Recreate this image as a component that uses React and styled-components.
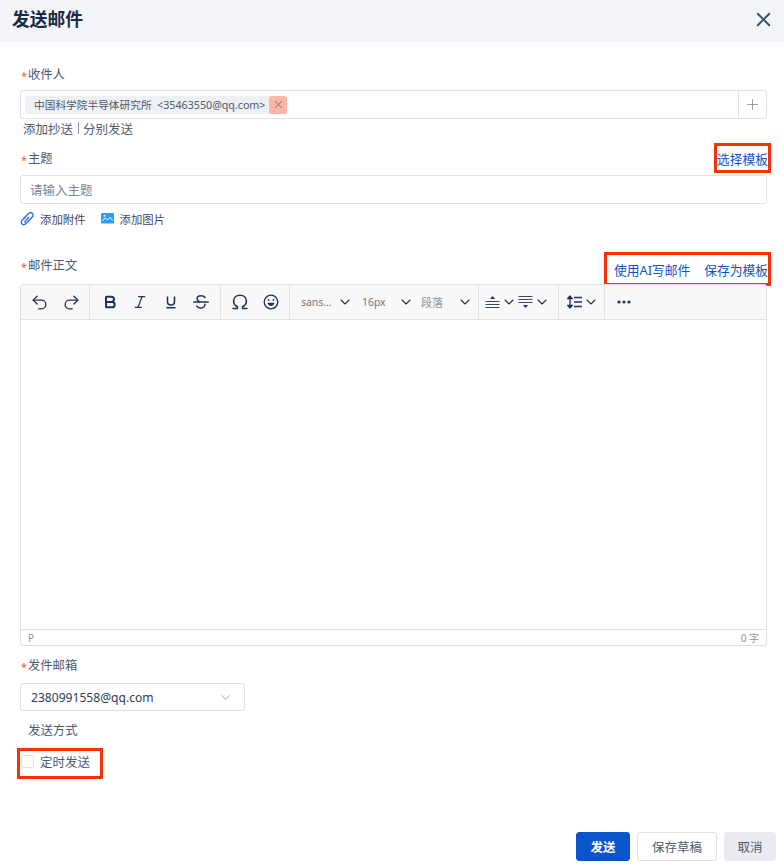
import React from "react"
import styled, { createGlobalStyle } from "styled-components"
import { Undo2, Redo2, Bold, Italic, ChevronDown, X, Plus } from "lucide-react"

const GlobalStyle = createGlobalStyle`
  html, body { margin: 0; padding: 0; background: #fff; }
  body { font-family: "Noto Sans", "Noto Sans CJK SC", sans-serif; }
  * { box-sizing: border-box; }
`

const Dialog = styled.div`
  width: 784px;
  height: 866px;
  display: flex;
  flex-direction: column;
  background: #fff;
  overflow: hidden;
`

const Header = styled.header`
  height: 42px;
  flex: none;
  display: flex;
  align-items: center;
  justify-content: space-between;
  padding: 0 9px 4px 12px;
  background: #f2f4f7;
`

const Title = styled.h1`
  margin: 0;
  font-size: 17.8px;
  font-weight: 700;
  line-height: 38px;
  color: #1a2b45;
`

const CloseButton = styled.span`
  display: flex;
  color: #3c4a63;
`

const Body = styled.div`
  flex: 1;
  display: flex;
  flex-direction: column;
  padding: 0 17px 0 20px;
`

const LabelRow = styled.div`
  height: 20px;
  flex: none;
  margin-top: ${p => p.$top}px;
  display: flex;
  align-items: center;
  justify-content: space-between;
`

const Label = styled.label`
  display: flex;
  align-items: center;
  font-size: 12.3px;
  line-height: 20px;
  color: #4d5a70;
  padding: 2px 0 0 8px;
  position: relative;
`

const Star = styled.span`
  position: absolute;
  left: 1px;
  top: 3px;
  font-size: 11px;
  color: #f5583a;
`

const RedBox = styled.div`
  flex: none;
  display: flex;
  align-items: center;
  gap: 14px;
  height: ${p => p.$h}px;
  margin-top: ${p => p.$top || 0}px;
  margin-right: -4px;
  padding: 2px 0 0 ${p => p.$pad}px;
  border: 3px solid #f5310a;
`

const LinkText = styled.a`
  font-size: 12.75px;
  line-height: 20px;
  color: #0a55cc;
  white-space: nowrap;
`

const RecipientBox = styled.div`
  height: 29px;
  margin-top: 6px;
  display: flex;
  align-items: center;
  justify-content: space-between;
  padding-left: 4px;
  border: 1px solid #dfe1e9;
  border-radius: 3px;
`

const Tag = styled.div`
  height: 18px;
  display: flex;
  align-items: center;
  padding-left: 9px;
  background: #eef0f4;
  border-radius: 3px;
  font-size: 10.7px;
  color: #505b70;
`

const TagClose = styled.span`
  width: 18px;
  height: 18px;
  margin-left: 4px;
  display: flex;
  align-items: center;
  justify-content: center;
  background: #fbb5a8;
  border-radius: 3px;
  color: #4d5a70;
`

const AddCell = styled.span`
  width: 28px;
  height: 100%;
  display: flex;
  align-items: center;
  justify-content: center;
  border-left: 1px solid #dfe1e9;
  color: #7c8698;
`

const CcRow = styled.div`
  height: 18px;
  flex: none;
  padding-left: 3px;
  display: flex;
  align-items: center;
  font-size: 12.5px;
  color: #4d5a70;
`

const CcDivider = styled.i`
  width: 1px;
  height: 12px;
  margin: 0 4.5px;
  background: #8a93a5;
`

const TextInput = styled.input`
  display: block;
  width: 100%;
  height: 29px;
  flex: none;
  margin-top: 7px;
  padding: 1px 9px 0;
  border: 1px solid #dfe1e9;
  border-radius: 3px;
  outline: none;
  font: 12.5px "Noto Sans", "Noto Sans CJK SC", sans-serif;
  &::placeholder { color: #7c8698; opacity: 1; }
`

const AttachRow = styled.div`
  height: 20px;
  flex: none;
  margin-top: 5px;
  display: flex;
  align-items: center;
  gap: 15px;
`

const AttachItem = styled.span`
  display: flex;
  align-items: center;
  gap: 6px;
  font-size: 11.4px;
  color: #3f4a5e;
`

const Editor = styled.div`
  height: 362px;
  flex: none;
  display: flex;
  flex-direction: column;
  border: 1px solid #dfe1e9;
  border-radius: 3px;
`

const Toolbar = styled.div`
  height: 35px;
  flex: none;
  display: flex;
  background: #f8f8f9;
  border-bottom: 1px solid #dfe1e9;
`

const ToolGroup = styled.div`
  display: flex;
  align-items: center;
  width: ${p => p.$w}px;
  padding-left: ${p => p.$pad}px;
  border-right: ${p => (p.$last ? "none" : "1px solid #dfe1e9")};
`

const ToolButton = styled.span`
  width: ${p => p.$w || 32}px;
  flex: none;
  display: flex;
  align-items: center;
  justify-content: center;
  gap: 1px;
  color: #1f3354;
`

const SelectTool = styled.span`
  width: ${p => p.$w}px;
  flex: none;
  margin-left: ${p => p.$left || 0}px;
  display: flex;
  align-items: center;
  justify-content: space-between;
  font-size: ${p => p.$size || 10.4}px;
  color: ${p => p.$color || "#6f7580"};
`

const ToolChevron = styled(ChevronDown)`
  color: #1f3354;
  flex: none;
`

const EditArea = styled.div`
  flex: 1;
`

const StatusBar = styled.div`
  height: 16px;
  flex: none;
  display: flex;
  align-items: center;
  justify-content: space-between;
  padding: 0 7px;
  border-top: 1px solid #dfe1e9;
  font-size: 10px;
  color: #8f959e;
`

const SelectBox = styled.div`
  width: 225px;
  height: 28px;
  flex: none;
  margin-top: 8px;
  display: flex;
  align-items: center;
  justify-content: space-between;
  padding: 0 11px 0 10px;
  border: 1px solid #dfe1e9;
  border-radius: 3px;
  font-size: 12.1px;
  color: #2d3c55;
`

const SelectChevron = styled(ChevronDown)`
  color: #7c8698;
`

const PlainLabel = styled.div`
  height: 20px;
  flex: none;
  margin-top: 10px;
  padding-left: 8px;
  font-size: 12.4px;
  line-height: 20px;
  color: #4d5a70;
`

const CheckRed = styled.div`
  width: 86px;
  height: 31px;
  flex: none;
  margin: 7px 0 0 -3px;
  padding-bottom: 5px;
  display: flex;
  align-items: center;
  gap: 6px;
  border: 3px solid #f5310a;
  font-size: 12.5px;
  color: #4d5a70;
`

const CheckBox = styled.span`
  width: 13px;
  height: 13px;
  margin-left: 1px;
  border: 1px solid #dfe1e9;
  border-radius: 2px;
  background: #fff;
`

const Footer = styled.footer`
  margin: auto -9px 0 0;
  padding: 0 0 5px;
  display: flex;
  justify-content: flex-end;
  gap: 7px;
`

const Button = styled.button`
  height: 29px;
  width: ${p => p.$w}px;
  padding: 0;
  border-radius: 3px;
  border: 1px solid ${p => (p.$kind === "primary" ? "#0a55cc" : p.$kind === "muted" ? "#e9ebf0" : "#dfe1e9")};
  background: ${p => (p.$kind === "primary" ? "#0a55cc" : p.$kind === "muted" ? "#e9ebf0" : "#fff")};
  color: ${p => (p.$kind === "primary" ? "#fff" : "#4d5a70")};
  font: ${p => (p.$kind === "primary" ? 700 : 400)} 12.5px "Noto Sans", "Noto Sans CJK SC", sans-serif;
`

const Clip = () => (
  <svg width="14" height="14" viewBox="0 0 14 14" fill="none" stroke="#2f6fe6" strokeWidth="1.4" strokeLinecap="round">
    <path d="M5.300 4.800 2.300 7.900c-1.200 1.300-1.300 3-.2 4 1 1 2.700.9 3.900-.3l5.900-6.200c1.400-1.500 1.500-3.300.4-4.200-1.100-.9-2.700-.7-4 .6L3.900 6.400" />
    <path d="M8.800 5.200 5.300 8.900c-.5.500-.5 1-.2 1.300" />
  </svg>
)

const Picture = () => (
  <svg width="13" height="12" viewBox="0 0 13 12">
    <rect width="13" height="10.500" rx="1.200" fill="#2a9df4" />
    <path d="M1.200 8 4.200 5l2.200 2L9 4.300l2.800 3.200" fill="none" stroke="#fff" strokeWidth="1" />
    <circle cx="3.500" cy="2.800" r="1" fill="#fff" />
  </svg>
)

const Underline = () => (
  <svg width="14" height="14" viewBox="0 0 14 14" fill="none" stroke="#1f3354" strokeWidth="1.600">
    <path d="M3.500 1.500v5.300c0 2 1.400 3.200 3.500 3.200s3.500-1.200 3.500-3.200V1.500" />
    <path d="M2.500 12.700h9" />
  </svg>
)

const Strike = () => (
  <svg width="16" height="16" viewBox="0 0 16 16" fill="none" stroke="#1f3354" strokeWidth="1.500" strokeLinecap="round">
    <path d="M12 3.500C11 2.200 9.600 1.800 8 1.800c-2.200 0-3.900 1-3.900 2.900 0 1.300.8 2.200 2.200 2.800" />
    <path d="M.800 8h14.400" />
    <path d="M11.900 10.200c.1 2.300-1.700 3.900-4 3.900-1.800 0-3.300-.6-4.100-2" />
  </svg>
)

const Omega = () => (
  <svg width="18" height="18" viewBox="0 0 18 18" fill="none" stroke="#1f3354" strokeWidth="1.600" strokeLinecap="round">
    <path d="M2 15.500h4.300v-1.800C4 12.500 2.600 10.500 2.600 8c0-3.500 2.800-5.800 6.400-5.800s6.400 2.300 6.400 5.800c0 2.500-1.400 4.500-3.700 5.700v1.800H16" />
  </svg>
)

const Emoji = () => (
  <svg width="16" height="16" viewBox="0 0 16 16" fill="none" stroke="#1f3354" strokeWidth="1.300">
    <circle cx="8" cy="8" r="6.800" />
    <circle cx="5.600" cy="6" r=".9" fill="#1f3354" stroke="none" />
    <circle cx="10.400" cy="6" r=".9" fill="#1f3354" stroke="none" />
    <path d="M4.500 8.800h7c-.3 2-1.700 3.200-3.500 3.200S4.800 10.800 4.500 8.800z" fill="#1f3354" stroke="none" />
  </svg>
)

const AlignTop = () => (
  <svg width="15" height="16" viewBox="0 0 15 16" fill="none" stroke="#3a4a63" strokeWidth="1">
    <path d="M5 5 7.500 2 10 5z" fill="#1f3354" stroke="none" />
    <path d="M.500 7.500h14M.500 10.500h14M.500 13.500h14" />
  </svg>
)

const AlignBottom = () => (
  <svg width="15" height="16" viewBox="0 0 15 16" fill="none" stroke="#3a4a63" strokeWidth="1">
    <path d="M5 11 7.500 14 10 11z" fill="#1f3354" stroke="none" />
    <path d="M.500 2.500h14M.500 5.500h14M.500 8.500h14" />
  </svg>
)

const LineHeight = () => (
  <svg width="15" height="14" viewBox="0 0 15 14" fill="none" stroke="#1f3354" strokeWidth="1.300">
    <path d="M3 1v12" />
    <path d="M.800 3.500 3 1l2.200 2.500z" fill="#1f3354" />
    <path d="M.800 10.500 3 13l2.200-2.500z" fill="#1f3354" />
    <path d="M7 2.500h8M7 7h8M7 11.500h8" />
  </svg>
)

const MoreDots = () => (
  <svg width="14" height="4" viewBox="0 0 14 4" fill="#1f3354">
    <circle cx="2" cy="2" r="1.600" />
    <circle cx="7" cy="2" r="1.600" />
    <circle cx="12" cy="2" r="1.600" />
  </svg>
)

const Chevron = () => <ToolChevron size={16} strokeWidth={1.7} />

const LabelGap = styled.div`
  height: 9px;
  flex: none;
`

export default function App() {
  return (
    <Dialog>
      <GlobalStyle />
      <Header>
        <Title>发送邮件</Title>
        <CloseButton><X size={23} strokeWidth={2} /></CloseButton>
      </Header>
      <Body>
        <LabelRow $top={22}>
          <Label><Star>*</Star>收件人</Label>
        </LabelRow>
        <RecipientBox>
          <Tag>
            中国科学院半导体研究所&nbsp;&nbsp;&lt;35463550@qq.com&gt;
            <TagClose><X size={13} strokeWidth={1.3} /></TagClose>
          </Tag>
          <AddCell><Plus size={17} strokeWidth={1.1} /></AddCell>
        </RecipientBox>
        <CcRow>添加抄送<CcDivider />分别发送</CcRow>

        <LabelRow $top={11}>
          <Label><Star>*</Star>主题</Label>
          <RedBox $h={30} $pad={0}>
            <LinkText>选择模板</LinkText>
          </RedBox>
        </LabelRow>
        <TextInput placeholder="请输入主题" />
        <AttachRow>
          <AttachItem><Clip />添加附件</AttachItem>
          <AttachItem><Picture />添加图片</AttachItem>
        </AttachRow>

        <LabelRow $top={26}>
          <Label><Star>*</Star>邮件正文</Label>
          <RedBox $h={34} $top={8} $pad={7}>
            <LinkText>使用AI写邮件</LinkText>
            <LinkText>保存为模板</LinkText>
          </RedBox>
        </LabelRow>
        <LabelGap />
        <Editor>
          <Toolbar>
            <ToolGroup $w={69} $pad={2}>
              <ToolButton><Undo2 size={19} strokeWidth={1.7} /></ToolButton>
              <ToolButton><Redo2 size={19} strokeWidth={1.7} /></ToolButton>
            </ToolGroup>
            <ToolGroup $w={131} $pad={5}>
              <ToolButton $w={30}><Bold size={16} strokeWidth={3} /></ToolButton>
              <ToolButton $w={30}><Italic size={16} strokeWidth={1.8} /></ToolButton>
              <ToolButton $w={31}><Underline /></ToolButton>
              <ToolButton $w={30}><Strike /></ToolButton>
            </ToolGroup>
            <ToolGroup $w={69} $pad={3}>
              <ToolButton $w={31}><Omega /></ToolButton>
              <ToolButton $w={31}><Emoji /></ToolButton>
            </ToolGroup>
            <ToolGroup $w={189} $pad={11}>
              <SelectTool $w={52}>sans...<Chevron /></SelectTool>
              <SelectTool $w={52} $left={9}>16px<Chevron /></SelectTool>
              <SelectTool $w={52} $left={7} $size={11} $color="#8d929b">段落<Chevron /></SelectTool>
            </ToolGroup>
            <ToolGroup $w={80} $pad={5}>
              <ToolButton $w={33}><AlignTop /><Chevron /></ToolButton>
              <ToolButton $w={34}><AlignBottom /><Chevron /></ToolButton>
            </ToolGroup>
            <ToolGroup $w={46} $pad={8}>
              <ToolButton $w={32}><LineHeight /><Chevron /></ToolButton>
            </ToolGroup>
            <ToolGroup $last $w={60} $pad={12}>
              <MoreDots />
            </ToolGroup>
          </Toolbar>
          <EditArea />
          <StatusBar><span>P</span><span>0 字</span></StatusBar>
        </Editor>

        <LabelRow $top={9}>
          <Label><Star>*</Star>发件邮箱</Label>
        </LabelRow>
        <SelectBox>
          2380991558@qq.com
          <SelectChevron size={15} strokeWidth={1.2} />
        </SelectBox>
        <PlainLabel>发送方式</PlainLabel>
        <CheckRed>
          <CheckBox />
          定时发送
        </CheckRed>
        <Footer>
          <Button $kind="primary" $w={54}>发送</Button>
          <Button $w={80}>保存草稿</Button>
          <Button $kind="muted" $w={52}>取消</Button>
        </Footer>
      </Body>
    </Dialog>
  )
}
